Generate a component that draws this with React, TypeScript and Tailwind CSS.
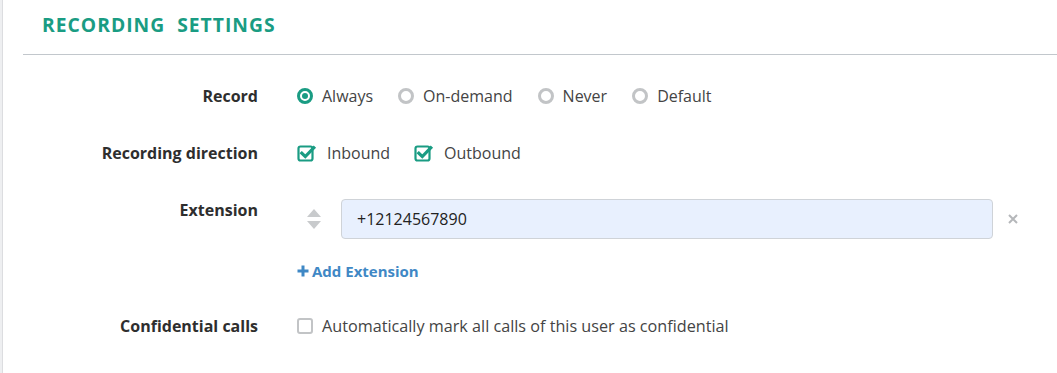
import React from "react";

const teal = "#1a9c83";

const Radio = ({ checked, label }: { checked?: boolean; label: string }) => (
  <label className="flex items-center gap-[9px] mr-[25px]">
    {checked ? (
      <span className="w-[16px] h-[16px] rounded-full border-[3px] border-[#1a9c83] flex items-center justify-center">
        <span className="w-[6px] h-[6px] rounded-full bg-[#1a9c83]" />
      </span>
    ) : (
      <span className="w-[16px] h-[16px] rounded-full border-[3px] border-[#c2c4c6]" />
    )}
    <span className="text-[16px] text-[#444]">{label}</span>
  </label>
);

const CheckIcon = () => (
  <svg width="20" height="18" viewBox="0 0 20 18">
    <rect x="1.5" y="2.5" width="14" height="14" rx="2" fill="none" stroke={teal} strokeWidth="2.2" />
    <path d="M4.8 9.2 L8.3 12.6 L16.8 3.8" fill="none" stroke={teal} strokeWidth="3.2" strokeLinecap="square" />
  </svg>
);

const Check = ({ label }: { label: string }) => (
  <label className="flex items-center gap-[10px] mr-6">
    <CheckIcon />
    <span className="text-[16px] text-[#444]">{label}</span>
  </label>
);

const Row = ({ label, children, className }: { label: string; children: React.ReactNode; className?: string }) => (
  <div className={"flex " + (className ?? "")}>
    <div className="w-[235px] shrink-0 text-right font-bold text-[16px] text-[#2e2e2e]">{label}</div>
    <div className="ml-[39px] flex-1">{children}</div>
  </div>
);

export default function App() {
  return (
    <div className="w-[1057px] h-[373px] bg-white flex" style={{ fontFamily: '"Open Sans", sans-serif' }}>
      <div className="w-[3px] bg-[#eeeff1] border-r border-[#dcdde0]" />
      <div className="flex-1 pl-[20px]">
        <h2 className="pl-[19px] pt-[10px] pb-[14px] text-[19.3px] font-bold tracking-[1px] text-[#1a9c83] border-b border-[#c2c7cc] leading-[30px]">
          RECORDING&nbsp;&nbsp;SETTINGS
        </h2>

        <Row label="Record" className="mt-[30px] leading-[22px]">
          <div className="flex items-center">
            <Radio checked label="Always" />
            <Radio label="On-demand" />
            <Radio label="Never" />
            <Radio label="Default" />
          </div>
        </Row>

        <Row label="Recording direction" className="mt-[35px] leading-[22px]">
          <div className="flex items-center">
            <Check label="Inbound" />
            <Check label="Outbound" />
          </div>
        </Row>

        <Row label="Extension" className="mt-[35px] leading-[22px]">
          <div className="flex items-start">
            <div className="w-[44px] h-[40px] flex items-center pl-[9px]">
              <svg width="16" height="22" viewBox="0 0 16 22">
                <path d="M8 1 L15 9 L1 9 Z" fill="#c8cacc" />
                <path d="M1 13 L15 13 L8 21 Z" fill="#c8cacc" />
              </svg>
            </div>
            <div className="w-[652px] h-[40px] rounded-[4px] border border-[#cfd3d8] bg-[#e8f0fe] flex items-center pl-[15px] text-[16px] text-[#222]">
              +12124567890
            </div>
            <div className="h-[40px] flex items-center ml-[15px]">
              <svg width="10" height="10" viewBox="0 0 10 10">
                <path d="M1 1 L9 9 M9 1 L1 9" stroke="#b5b7ba" strokeWidth="2" />
              </svg>
            </div>
          </div>
          <div className="mt-[21px] flex items-center gap-[3px] text-[15px] font-bold text-[#3f88c5]">
            <svg width="12" height="12" viewBox="0 0 12 12">
              <path d="M6 0.5 V11.5 M0.5 6 H11.5" stroke="#3f88c5" strokeWidth="3" />
            </svg>
            Add Extension
          </div>
        </Row>

        <Row label="Confidential calls" className="mt-[33px] leading-[22px]">
          <label className="flex items-center gap-[9px]">
            <span className="w-[16px] h-[16px] rounded-[3px] border-2 border-[#c2c4c6]" />
            <span className="text-[16.2px] text-[#444]">Automatically mark all calls of this user as confidential</span>
          </label>
        </Row>
      </div>
    </div>
  );
}
